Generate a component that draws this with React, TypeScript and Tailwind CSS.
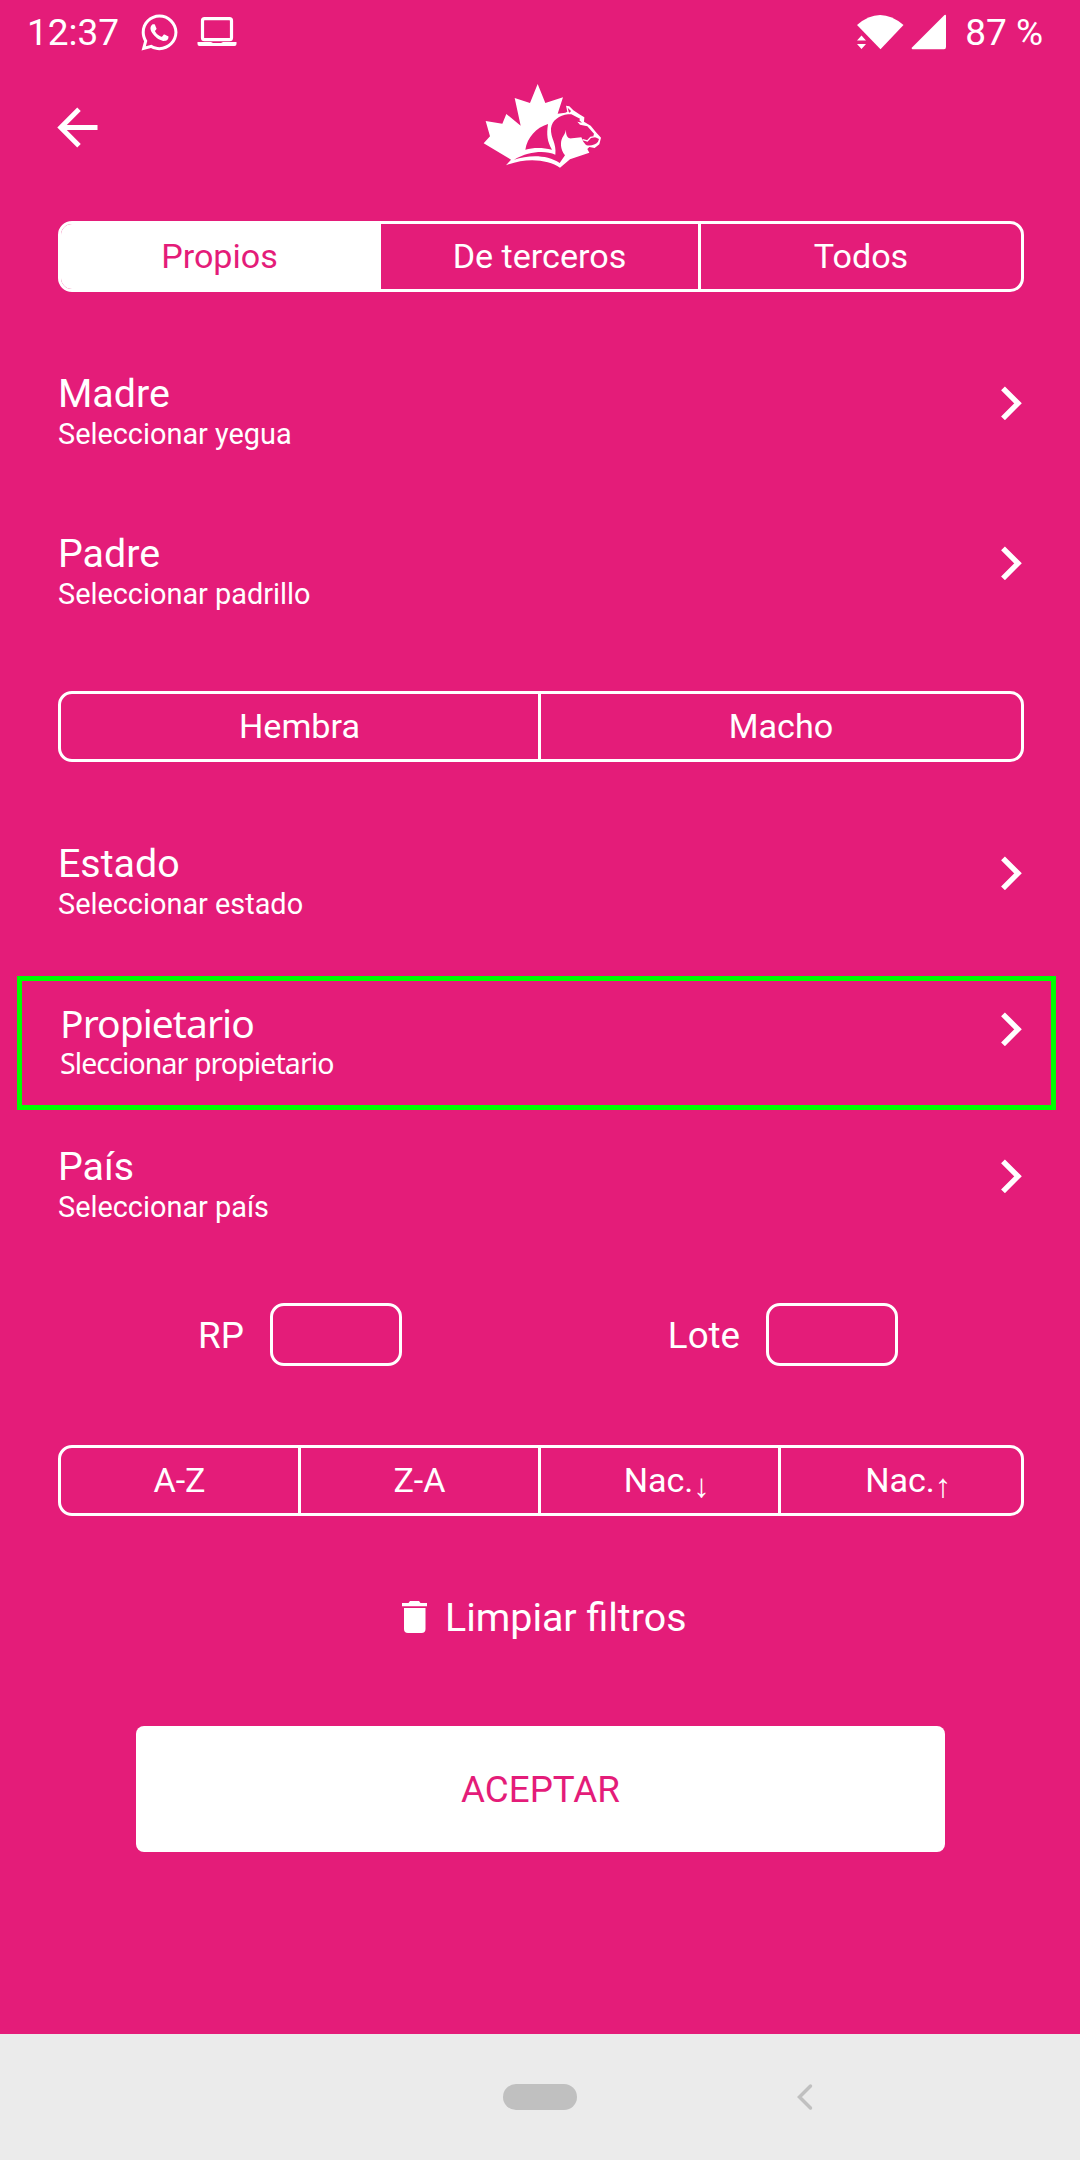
import React from "react";
import { FaWhatsapp } from "react-icons/fa";

function Chevron() {
  return (
    <svg className="h-[34px] w-[22px] shrink-0" viewBox="0 0 22 34" fill="none" stroke="#fff" strokeWidth="5.4">
      <path d="M2 2.300 L17 17.300 L2 32.300" />
    </svg>
  );
}

function Logo() {
  return (
    <svg className="h-[100px] w-[145px]" viewBox="0 0 435 300">
      <path
        fill="#fff"
        d="M203 27 L226 84 L279 67 L263 116 L286 113 L292 110 L288 92 L298 94 L310 106 L328 118 L343 127 L342 140 L362 152 L378 172 L393 188 L388 208 L374 219 L358 216 L352 222 L358 233 L300 253 L270 278 C235 254 170 246 108 271 L123 254 L41 205 L60 184 L47 138 L97 146 L109 117 L152 152 L134 69 L180 84 Z"
      />
      <g fill="#e41c79">
        <path d="M234 147 C198 158 172 188 166 224 C190 217 218 217 246 224 C232 200 229 180 234 147 Z" />
        <path d="M294 118 C268 121 246 136 243 160 C241 190 260 204 256 239 C226 226 178 228 132 254 C176 240 230 238 269 264 L285 241 C270 222 271 200 277 188 C281 180 286 176 288 164 C287 182 294 192 306 190 L334 187 L340 200 L348 210 C360 214 376 210 384 200 L387 192 L370 184 L372 176 L352 154 L330 149 L322 140 L336 143 L328 136 L330 131 L304 118 Z" />
        <path d="M293 98 L303 108 L299 113 L296 110 Z" />
      </g>
      <path d="M338 194 L352 198 L362 187 L380 184" fill="none" stroke="#fff" strokeWidth="4" />
    </svg>
  );
}

function StatusBar() {
  return (
    <div className="flex h-16 items-center pl-[27px] pr-[37px] text-[37px] leading-[66px]">
      <span className="mt-[2px]">12:37</span>
      <FaWhatsapp className="ml-[20px] h-[41px] w-[41px]" />
      <svg className="ml-[17px] h-[30px] w-[40px]" viewBox="0 0 40 30">
        <rect x="5.5" y="1.7" width="29" height="21" rx="2" fill="none" stroke="#fff" strokeWidth="3.2" />
        <path d="M0.5 25 H14 L16 26 H24 L26 25 H39.500 V27 Q39.500 29 37.500 29 H2.500 Q.5 29 .5 27 Z" fill="#fff" />
      </svg>
      <svg className="ml-auto h-[36px] w-[90px]" viewBox="0 0 90 36" fill="#fff">
        <path d="M1 11 Q24 -9 47.500 11 L24.500 35.300 Z" />
        <path d="M-2 18 L5.500 18 L16 28 L12 38 L-2 38 Z" fill="#e41c79" />
        <path d="M5.500 21.500 L10 26.500 H1 Z M1 30 H10 L5.500 35 Z" />
        <path d="M90 2 V33 Q90 35.300 88 35.300 H56.500 Q55 35 56 33.500 L88.500 1 Q90 0 90 2 Z" />
      </svg>
      <span className="ml-[19px] mt-[2px]">87 %</span>
    </div>
  );
}

function Segmented({ items }: { items: { label: string; active?: boolean; arrow?: string }[] }) {
  return (
    <div className="ml-[58px] grid h-[71px] w-[966px] auto-cols-fr grid-flow-col grid-rows-[65px] overflow-hidden rounded-[14px] border-[3px] border-white">
      {items.map((it) => (
        <div
          key={it.label + (it.arrow ?? "")}
          className={
            "flex items-center justify-center border-r-[3px] border-white text-[34.125px] leading-[65px] last:border-r-0 " +
            (it.active ? "bg-white text-[#e41c79]" : "")
          }
        >
          <span>{it.label}</span>
          {it.arrow && (
            <span className="mt-[12px] w-[2px] whitespace-nowrap font-['Liberation_Serif'] text-[33px]">{it.arrow}</span>
          )}
        </div>
      ))}
    </div>
  );
}

function SelectRow({ title, sub }: { title: string; sub: string }) {
  return (
    <div className="flex h-[81px] justify-between pl-[58px] pr-[57px]">
      <div>
        <div className="pt-px text-[39.375px] leading-[40px]">{title}</div>
        <div className="text-[28.875px] leading-[40px]">{sub}</div>
      </div>
      <div className="mt-[13px]">
        <Chevron />
      </div>
    </div>
  );
}

function Field({ label }: { label: string }) {
  return (
    <div className="flex h-[64px] items-start gap-[26px]">
      <span className="text-[36.75px] leading-[65px]">{label}</span>
      <div className="h-[63px] w-[132px] rounded-[14px] border-[3px] border-white" />
    </div>
  );
}

export default function App() {
  return (
    <div className="flex h-[2160px] w-[1080px] flex-col overflow-hidden bg-[#e41c79] font-[Roboto,sans-serif] text-white">
      <StatusBar />
      <header className="grid h-[126px] grid-cols-3 items-start pt-[11px]">
        <svg className="ml-[56px] mt-[32px] h-[42px] w-[42px]" viewBox="0 0 42 42" fill="none" stroke="#fff" strokeWidth="5">
          <path d="M41.500 20.500 H5 M23 2.200 L4.800 20.500 L23 38.800" />
        </svg>
        <div className="pl-[110px]">
          <Logo />
        </div>
      </header>

      <div className="mt-[31px]">
        <Segmented items={[{ label: "Propios", active: true }, { label: "De terceros" }, { label: "Todos" }]} />
      </div>
      <div className="mt-[81px]">
        <SelectRow title="Madre" sub="Seleccionar yegua" />
      </div>
      <div className="mt-[79px]">
        <SelectRow title="Padre" sub="Seleccionar padrillo" />
      </div>
      <div className="mt-[77px]">
        <Segmented items={[{ label: "Hembra" }, { label: "Macho" }]} />
      </div>
      <div className="mt-[81px]">
        <SelectRow title="Estado" sub="Seleccionar estado" />
      </div>

      <div className="ml-[17px] mt-[52px] flex h-[134px] w-[1039px] justify-between border-[5px] border-[#00ff00] pl-[38px] pr-[28px]">
        <div className="pt-[21px] font-['Noto_Sans']">
          <div className="text-[39px] leading-[42px] tracking-[-0.95px]">Propietario</div>
          <div className="pt-px text-[28.500px] leading-[37px] tracking-[-0.9px]">Sleccionar propietario</div>
        </div>
        <div className="mt-[31px]">
          <Chevron />
        </div>
      </div>

      <div className="mt-[36px]">
        <SelectRow title="País" sub="Seleccionar país" />
      </div>

      <div className="mt-[76px] flex pl-[198px]">
        <Field label="RP" />
        <div className="ml-[266px]">
          <Field label="Lote" />
        </div>
      </div>

      <div className="mt-[78px]">
        <Segmented
          items={[{ label: "A-Z" }, { label: "Z-A" }, { label: "Nac.", arrow: "↓" }, { label: "Nac.", arrow: "↑" }]}
        />
      </div>

      <div className="mt-[78px] flex h-[48px] items-center pl-[402px]">
        <svg className="mb-[3px] h-[32px] w-[25px]" viewBox="0 0 25 32" fill="#fff">
          <path d="M0 2 H6.500 L8 0 H17 L18.500 2 H25 V5.300 H0 Z" />
          <path d="M2 7 H23.500 V28 Q23.500 32 19.500 32 H6 Q2 32 2 28 Z" />
        </svg>
        <span className="ml-[18px] text-[39.375px] leading-[48px]">Limpiar filtros</span>
      </div>

      <button className="ml-[136px] mt-[84px] h-[126px] w-[809px] rounded-[8px] bg-white pt-px text-[36.75px] leading-[126px] text-[#e41c79]">
        ACEPTAR
      </button>

      <nav className="mt-auto flex h-[126px] items-center bg-[#ebebeb] pl-[503px]">
        <div className="h-[26px] w-[74px] rounded-full bg-[#c0c0c0]" />
        <svg className="ml-[219px] h-[28px] w-[18px]" viewBox="0 0 18 28" fill="none" stroke="#c0c0c0" strokeWidth="3.500" strokeLinecap="round">
          <path d="M14.500 3 L3.500 14 L14.500 25" />
        </svg>
      </nav>
    </div>
  );
}
